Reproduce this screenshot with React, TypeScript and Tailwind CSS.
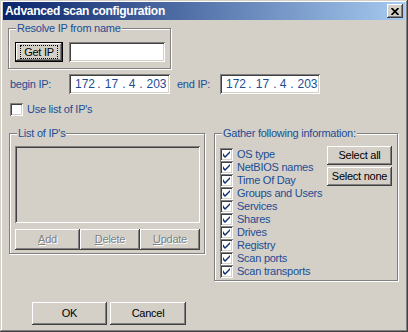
import React from "react";

const raised =
  "shadow-[inset_-1px_-1px_#404040,inset_1px_1px_#ffffff,inset_-2px_-2px_#808080,inset_2px_2px_#d4d0c8]";
const sunken =
  "shadow-[inset_1px_1px_#808080,inset_-1px_-1px_#ffffff,inset_2px_2px_#404040,inset_-2px_-2px_#d4d0c8]";

function Group({
  label,
  className,
  children,
}: {
  label: string;
  className: string;
  children?: React.ReactNode;
}) {
  return (
    <div
      className={`relative border border-[#808080] shadow-[inset_1px_1px_0_#ffffff,1px_1px_0_#ffffff] ${className}`}
    >
      <span className="absolute left-[7px] top-[-7px] bg-[#d4d0c8] px-[1px] leading-[13px] text-[#1b4d94] whitespace-nowrap">
        {label}
      </span>
      {children}
    </div>
  );
}

function Check({ checked }: { checked: boolean }) {
  return (
    <div
      className={`w-[13px] h-[13px] bg-white ${sunken} flex items-center justify-center shrink-0`}
    >
      {checked && (
        <svg width="7" height="7" viewBox="0 0 7 7">
          <path d="M0 2 L0 5 L2 7 L7 2 L7 0 L2 5 Z" fill="#10306f" />
        </svg>
      )}
    </div>
  );
}

function IpField({ className }: { className: string }) {
  return (
    <div
      className={`h-[20px] bg-white ${sunken} flex items-center pl-[6px] text-[#1b4d94] text-[12px] tracking-normal ${className}`}
    >
      <span className="w-[20px] text-center">172</span>
      <span className="w-[8px] text-center">.</span>
      <span className="w-[17px] text-center">17</span>
      <span className="w-[8px] text-center">.</span>
      <span className="w-[8px] text-center">4</span>
      <span className="w-[10px] text-center">.</span>
      <span className="w-[21px] text-center">203</span>
    </div>
  );
}

function DisabledBtn({ first, rest, className }: { first: string; rest: string; className: string }) {
  return (
    <div
      className={`h-[21px] ${raised} flex items-center justify-center text-[#808080] [text-shadow:1px_1px_0_#ffffff] ${className}`}
    >
      <span>
        <span className="underline">{first}</span>
        {rest}
      </span>
    </div>
  );
}

const items = [
  "OS type",
  "NetBIOS names",
  "Time Of Day",
  "Groups and Users",
  "Services",
  "Shares",
  "Drives",
  "Registry",
  "Scan ports",
  "Scan transports",
];

export default function App() {
  return (
    <div
      className={`w-[408px] h-[332px] bg-[#d4d0c8] flex flex-col font-['Liberation_Sans',Arial,sans-serif] text-[11px] leading-[13px] tracking-[-0.25px] text-black shadow-[inset_-1px_-1px_#404040,inset_1px_1px_#d4d0c8,inset_-2px_-2px_#808080,inset_2px_2px_#ffffff] overflow-hidden`}
    >
      {/* title bar */}
      <div className="px-[3px] pt-[2px]">
        <div className="h-[18px] bg-[linear-gradient(to_right,#0a246a,#a6caf0)] flex items-center pl-[2px] pr-[2px]">
          <span className="text-white font-bold text-[12px] tracking-[-0.3px] leading-[18px] whitespace-nowrap">
            Advanced scan configuration
          </span>
          <div
            className={`ml-auto w-[16px] h-[14px] bg-[#d4d0c8] ${raised} flex items-center justify-center`}
          >
            <svg width="8" height="7" viewBox="0 0 8 7">
              <path d="M0.5 0 L7.5 7 M7.5 0 L0.5 7" stroke="#000" strokeWidth="1.7" />
            </svg>
          </div>
        </div>
      </div>

      {/* content */}
      <div className="flex flex-col pl-[8px]">
        <Group label="Resolve IP from name" className="mt-[8px] w-[163px] h-[41px] pl-[6px] pt-[13px]">
          <div className="flex items-start gap-[6px]">
            <div className="w-[48px] h-[20px] border border-black flex items-center justify-center">
              <div
                className={`w-full h-full ${raised} flex items-center justify-center`}
              >
                <span className="border border-dotted border-black px-[3px] leading-[12px]">Get IP</span>
              </div>
            </div>
            <div className={`w-[96px] h-[20px] bg-white ${sunken}`} />
          </div>
        </Group>

        <div className="mt-[5px] flex items-center h-[20px]">
          <span className="ml-[2px] w-[59px] text-[#1b4d94]">begin IP:</span>
          <IpField className="w-[101px]" />
          <span className="ml-[7px] w-[43px] text-[#1b4d94]">end IP:</span>
          <IpField className="w-[100px]" />
        </div>

        <div className="mt-[9px] ml-[2px] flex items-center gap-[4px] h-[13px]">
          <Check checked={false} />
          <span className="text-[#1b4d94]">Use list of IP's</span>
        </div>

        <div className="mt-[17px] flex items-start">
          <Group label="List of IP's" className="ml-[1px] w-[196px] h-[121px] pl-[5px] pt-[12px]">
            <div className={`w-[185px] h-[77px] bg-[#d4d0c8] ${sunken}`} />
            <div className="mt-[6px] flex">
              <DisabledBtn first="A" rest="dd" className="w-[65px]" />
              <DisabledBtn first="D" rest="elete" className="w-[60px]" />
              <DisabledBtn first="U" rest="pdate" className="w-[60px]" />
            </div>
          </Group>

          <Group label="Gather following information:" className="ml-[9px] w-[184px] h-[148px] flex">
            <div className="pl-[5px] pt-[14px] flex flex-col">
              {items.map((it) => (
                <div key={it} className="flex items-center gap-[4px] h-[13px]">
                  <Check checked={true} />
                  <span className="text-[#1b4d94] leading-[13px] whitespace-nowrap">{it}</span>
                </div>
              ))}
            </div>
            <div className="ml-auto mr-[5px] pt-[12px] flex flex-col gap-[2px]">
              <div className={`w-[65px] h-[19px] ${raised} flex items-center justify-center`}>
                Select all
              </div>
              <div className={`w-[65px] h-[19px] ${raised} flex items-center justify-center`}>
                Select none
              </div>
            </div>
          </Group>
        </div>

        <div className="mt-[21px] ml-[24px] flex gap-[3px]">
          <div className={`w-[75px] h-[23px] ${raised} flex items-center justify-center`}>OK</div>
          <div className={`w-[76px] h-[23px] ${raised} flex items-center justify-center`}>Cancel</div>
        </div>
      </div>
    </div>
  );
}
